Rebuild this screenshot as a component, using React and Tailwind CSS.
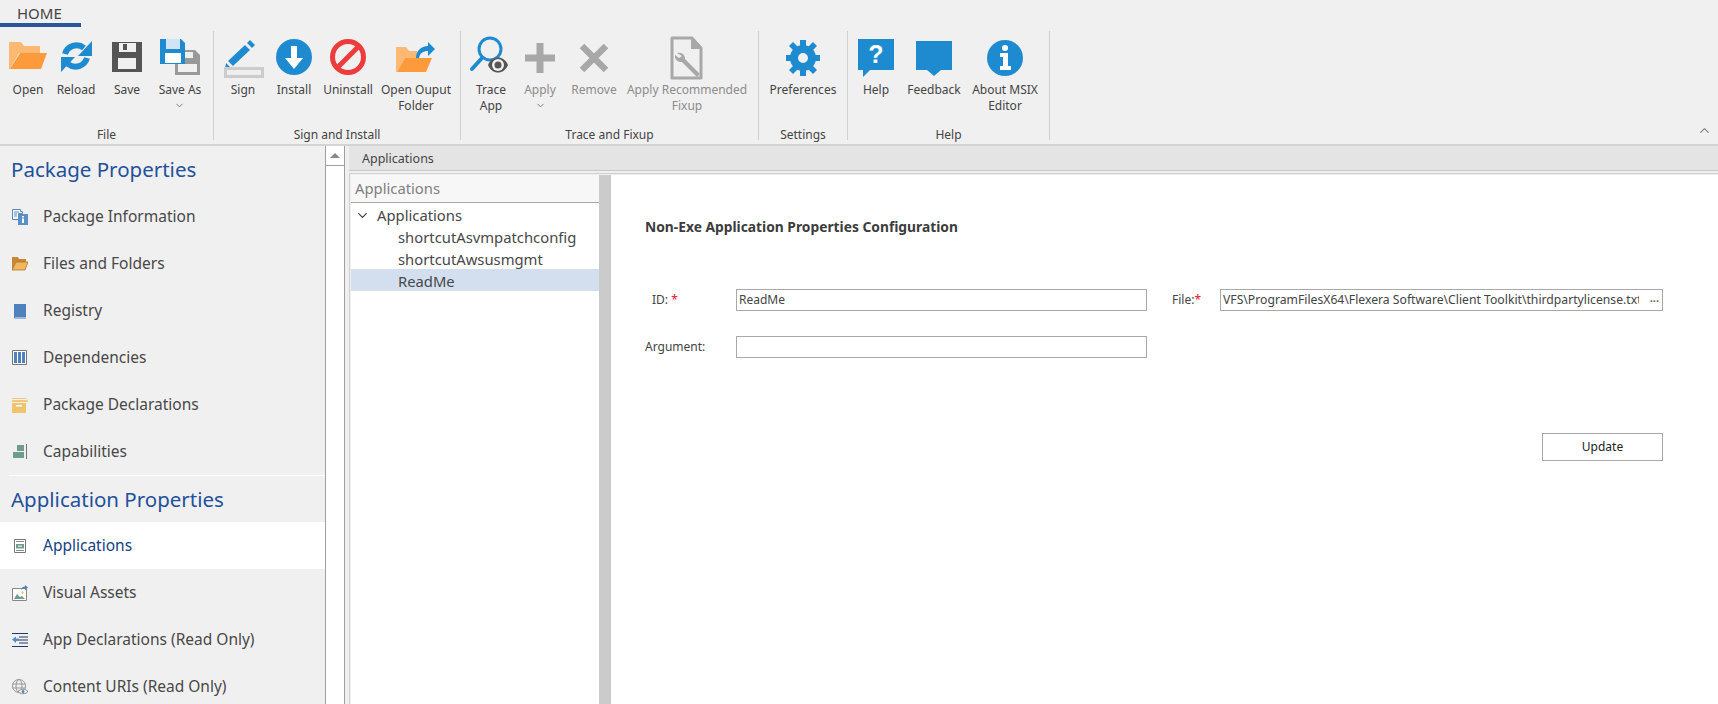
import { ChevronDown, ChevronUp } from 'lucide-react'

const BLUE = '#1e8bd0'
const GREY = '#a8a8a8'

function Ico({ children }) {
    return (
        <svg width="44" height="40" viewBox="0 0 44 40" className="overflow-visible">
            {children}
        </svg>
    )
}

const icons = {
    open: (
        <Ico>
            <path d="M3 4h12l3 4h16v7H13L4 31H3z" fill="#fdb873" />
            <path d="M14 15h27l-6 16H4z" fill="#fd9a3c" />
        </Ico>
    ),
    reload: (
        <Ico>
            <path d="M11 16a12 12 0 0 1 19-6" fill="none" stroke={BLUE} strokeWidth="6" />
            <path d="M38 3v15H24z" fill={BLUE} />
            <path d="M33 20a12 12 0 0 1-19 6" fill="none" stroke={BLUE} strokeWidth="6" />
            <path d="M7 34V19h14z" fill={BLUE} />
        </Ico>
    ),
    save: (
        <Ico>
            <path d="M7 4h30v30H7z" fill="#555" />
            <path d="M14 5h17v9H14z" fill="#f0f0f0" />
            <path d="M18 6h4v6h-4z" fill="#555" />
            <path d="M13 20h18v11H13z" fill="#f0f0f0" />
        </Ico>
    ),
    saveAs: (
        <Ico>
            <path d="M17 12h20l5 5v20H17z" fill="#999" />
            <path d="M25 14h10v6H25z" fill="#f0f0f0" />
            <path d="M20 26h19v8H20z" fill="#f0f0f0" />
            <path d="M2 1h21l4 4v21H2z" fill={BLUE} />
            <path d="M8 1h14v10H8z" fill="#cfe5f5" />
            <path d="M7 15h16v10H7z" fill="#fff" />
        </Ico>
    ),
    sign: (
        <Ico>
            <path d="M7 23 24 7l5 5-17 16z" fill={BLUE} />
            <path d="M26 5l3-3 5 5-3 3z" fill={BLUE} />
            <path d="M5 25l5 5-6 1z" fill={BLUE} />
            <rect x="4.5" y="30.5" width="37" height="8" fill="#eee" stroke="#ccc" strokeWidth="3" />
        </Ico>
    ),
    install: (
        <Ico>
            <circle cx="22" cy="19" r="18" fill={BLUE} />
            <path d="M19 8h6v12h6l-9 11-9-11h6z" fill="#fff" />
        </Ico>
    ),
    uninstall: (
        <Ico>
            <circle cx="22" cy="19" r="15.5" fill="none" stroke="#ee3b3b" strokeWidth="5" />
            <path d="M11 30 33 8" stroke="#ee3b3b" strokeWidth="5" />
        </Ico>
    ),
    openOutput: (
        <Ico>
            <path d="M2 9h10l3 4h8v7H11L3 34H2z" fill="#fdb873" />
            <path d="M11 20h27l-6 14H3z" fill="#fd9a3c" />
            <path d="M22 20c0-7 5-12 12-12V4l7 7-7 7v-5c-5 0-8 2-9 7z" fill={BLUE} />
        </Ico>
    ),
    trace: (
        <Ico>
            <circle cx="21" cy="11" r="11" fill="none" stroke={BLUE} strokeWidth="3" />
            <path d="M13 20 3 31" stroke={BLUE} strokeWidth="4" strokeLinecap="round" />
            <path d="M19 27c4-10 16-10 20 0-4 10-16 10-20 0z" fill="#555" />
            <circle cx="29" cy="27" r="6" fill="#f0f0f0" />
            <circle cx="29" cy="27" r="3.5" fill="#555" />
        </Ico>
    ),
    plus: (
        <Ico>
            <path d="M22 5v30M7 20h30" stroke={GREY} strokeWidth="7" />
        </Ico>
    ),
    remove: (
        <Ico>
            <path d="M10 8l24 24M34 8 10 32" stroke={GREY} strokeWidth="6.5" />
        </Ico>
    ),
    fixup: (
        <Ico>
            <path d="M7 0h20l9 10v30H7z" fill="none" stroke={GREY} strokeWidth="3" strokeLinejoin="round" />
            <path d="M26 0l10 11H26z" fill={GREY} />
            <path d="M12 15a6 6 0 0 1 8 6l15 15-3 3-15-15a6 6 0 0 1-7-7l4 3 3-2z" fill={GREY} />
        </Ico>
    ),
    gear: (
        <Ico>
            <g fill={BLUE}>
                <path d="M22 7a13 13 0 1 0 0 26 13 13 0 0 0 0-26zm0 8a5 5 0 1 1 0 10 5 5 0 0 1 0-10z" fillRule="evenodd" />
                <path d="M19 2h6v7h-6z" />
                <path d="M19 31h6v7h-6z" />
                <path d="M5 17h7v6H5z" />
                <path d="M32 17h7v6h-7z" />
                <path d="M8 8l4-4 6 6-4 4z" />
                <path d="M36 8l-4-4-6 6 4 4z" />
                <path d="M8 32l4 4 6-6-4-4z" />
                <path d="M36 32l-4 4-6-6 4-4z" />
            </g>
        </Ico>
    ),
    help: (
        <Ico>
            <path d="M4 1h36v31H16l-7 7v-7H4z" fill={BLUE} />
            <text x="22" y="25" textAnchor="middle" fontSize="25" fontWeight="700" fill="#fff" fontFamily="'Liberation Sans', sans-serif">?</text>
        </Ico>
    ),
    feedback: (
        <Ico>
            <path d="M4 3h36v29H29l-7 6-7-6H4z" fill={BLUE} />
        </Ico>
    ),
    about: (
        <Ico>
            <circle cx="22" cy="20" r="18" fill={BLUE} />
            <circle cx="22" cy="10" r="3" fill="#fff" />
            <path d="M17 15h8v13h3v4H17v-4h3v-9h-3z" fill="#fff" />
        </Ico>
    ),
}

const groups = [
    {
        label: 'File', width: 'w-[214px]', pad: 'pl-[4px]',
        items: [
            { w: 'w-[48px]', icon: 'open', text: ['Open'] },
            { w: 'w-[48px]', icon: 'reload', text: ['Reload'] },
            { w: 'w-[54px]', icon: 'save', text: ['Save'] },
            { w: 'w-[52px]', icon: 'saveAs', text: ['Save As'], arrow: true },
        ],
    },
    {
        label: 'Sign and Install', width: 'w-[247px]', pad: 'pl-[4px]',
        items: [
            { w: 'w-[50px]', icon: 'sign', text: ['Sign'] },
            { w: 'w-[52px]', icon: 'install', text: ['Install'] },
            { w: 'w-[56px]', icon: 'uninstall', text: ['Uninstall'] },
            { w: 'w-[80px]', icon: 'openOutput', text: ['Open Ouput', 'Folder'] },
        ],
    },
    {
        label: 'Trace and Fixup', width: 'w-[298px]', pad: '',
        items: [
            { w: 'w-[60px]', icon: 'trace', text: ['Trace', 'App'] },
            { w: 'w-[38px]', icon: 'plus', text: ['Apply'], arrow: true, off: true },
            { w: 'w-[70px]', icon: 'remove', text: ['Remove'], off: true },
            { w: 'w-[116px]', icon: 'fixup', text: ['Apply Recommended', 'Fixup'], off: true },
        ],
    },
    {
        label: 'Settings', width: 'w-[89px]', pad: '',
        items: [{ w: 'w-[88px]', icon: 'gear', text: ['Preferences'] }],
    },
    {
        label: 'Help', width: 'w-[202px]', pad: '',
        items: [
            { w: 'w-[56px]', icon: 'help', text: ['Help'] },
            { w: 'w-[60px]', icon: 'feedback', text: ['Feedback'] },
            { w: 'w-[82px]', icon: 'about', text: ['About MSIX', 'Editor'] },
        ],
    },
]

function RibbonButton({ item }) {
    return (
        <div className={`${item.w} flex flex-col items-center flex-shrink-0`}>
            <div className="h-[40px] w-[44px]">{icons[item.icon]}</div>
            <div className={`mt-[4px] text-[12px] leading-[16px] text-center whitespace-nowrap ${item.off ? 'text-[#8c8c8c]' : 'text-[#444]'}`}>
                {item.text.map((t) => (
                    <div key={t}>{t}</div>
                ))}
                {item.arrow && <ChevronDown size={11} className="mx-auto mt-[2px] text-[#777]" />}
            </div>
        </div>
    )
}

function Ribbon() {
    return (
        <div className="h-[146px] flex-shrink-0 bg-[#f0f0f0] border-b-2 border-[#d4d4d4] relative">
            <div className="h-[27px] w-[81px] border-b-4 border-[#2b579a] text-[15px] leading-[26px] text-[#444] pl-[17px]">HOME</div>
            <div className="flex mt-[4px] h-[109px]">
                {groups.map((g) => (
                    <div key={g.label} className={`${g.width} flex-shrink-0 border-r border-[#d0d0d0] flex flex-col`}>
                        <div className={`flex flex-1 pt-[7px] ${g.pad}`}>
                            {g.items.map((it) => (
                                <RibbonButton key={it.icon} item={it} />
                            ))}
                        </div>
                        <div className="text-center text-[12px] leading-[16px] text-[#444] mb-[-3px]">{g.label}</div>
                    </div>
                ))}
            </div>
            <ChevronUp size={15} className="absolute right-[6px] top-[123px] text-[#888]" />
        </div>
    )
}

const navIcons = {
    info: (
        <svg width="16" height="16" viewBox="0 0 16 16">
            <path d="M.5.5h8v2h2v2h-4v6h-6z" fill="#fff" stroke="#5b86b8" />
            <path d="M2 3h5M2 5h3M2 7h3" stroke="#5b86b8" />
            <path d="M6 5h10v11H6z" fill="#5b8fc7" />
            <path d="M10 7h2v1.5h-2zM10 9.5h2V14h-2z" fill="#fff" />
        </svg>
    ),
    folder: (
        <svg width="16" height="16" viewBox="0 0 16 16">
            <path d="M0 1h6l1 2h7v3H4L1 14H0z" fill="#c7873a" />
            <path d="M4 6h12l-3 8H0z" fill="#f0b75e" stroke="#b7722a" strokeWidth=".8" />
        </svg>
    ),
    book: (
        <svg width="16" height="16" viewBox="0 0 16 16">
            <path d="M3 1h11v13H3z" fill="#4f81bd" />
            <path d="M2.5 1v14H14" fill="none" stroke="#4f81bd" />
        </svg>
    ),
    columns: (
        <svg width="16" height="16" viewBox="0 0 16 16">
            <path d="M.5.5h14v14H.5z" fill="#fff" stroke="#777" />
            <path d="M2 2h3v11H2zM6 2h3v11H6zM10 2h3v11h-3z" fill="#4f81bd" />
        </svg>
    ),
    box: (
        <svg width="16" height="16" viewBox="0 0 16 16">
            <path d="M0 1h14v1H0zM0 3h16v2H0z" fill="#f2c877" />
            <path d="M15 1v3" stroke="#ddd" />
            <path d="M0 6h14v10H0z" fill="#f0c36d" />
            <path d="M4 8h6v1.5H4z" fill="#fff" />
        </svg>
    ),
    caps: (
        <svg width="16" height="16" viewBox="0 0 16 16">
            <path d="M5 1h7v6H5zM1 8h11v6H1z" fill="#6f9d8c" />
            <path d="M14.5 0v15" stroke="#777" />
        </svg>
    ),
    app: (
        <svg width="16" height="16" viewBox="0 0 16 16">
            <path d="M2.5 1.5h11v13h-11z" fill="#fff" stroke="#777" />
            <path d="M4 3.5h8M4 12.5h8" stroke="#888" />
            <path d="M4 6h8v4.5H4z" fill="#6f9d8c" />
            <path d="M6 7.5h4V9H6z" fill="#cfe0d8" />
        </svg>
    ),
    visual: (
        <svg width="16" height="16" viewBox="0 0 16 16">
            <path d="M.5 3.5h14v12H.5z" fill="#fff" stroke="#888" />
            <path d="M2 14l3-5 3 3 2-1 3 3z" fill="#6f9d8c" />
            <path d="M9 5c0-2 2-3.5 4-3.5V0l3 2.5L13 5V3.500c-2 0-3 .5-4 1.500z" fill="#4f81bd" />
            <circle cx="10.5" cy="7.5" r="1.2" fill="#f0c36d" />
        </svg>
    ),
    decl: (
        <svg width="16" height="16" viewBox="0 0 16 16">
            <path d="M0 1.5h16M7 5h9M7 8h9M7 11h9M0 14.500h16" stroke="#1f3864" />
            <path d="M0 7.5 4 4.5v2h3V9H4v2z" fill="#4f8fd1" />
        </svg>
    ),
    globe: (
        <svg width="16" height="16" viewBox="0 0 16 16">
            <circle cx="7" cy="7" r="6.5" fill="none" stroke="#999" />
            <ellipse cx="7" cy="7" rx="3" ry="6.5" fill="none" stroke="#999" />
            <path d="M.5 5h13M.5 9h13" stroke="#999" />
            <path d="M6 12.5c2.500-3 7-3 10 0-3 3-7.500 3-10 0z" fill="#fff" stroke="#888" />
            <circle cx="11" cy="12.5" r="1.5" fill="#4f81bd" />
        </svg>
    ),
}

function NavItem({ icon, label, active }) {
    return (
        <div className={`h-[47px] flex items-center pl-[12px] flex-shrink-0 ${active ? 'bg-white text-[#14427f]' : 'text-[#484848]'}`}>
            <span className="w-[31px] flex-shrink-0">{navIcons[icon]}</span>
            <span className="text-[15.5px] whitespace-nowrap">{label}</span>
        </div>
    )
}

function Sidebar() {
    return (
        <aside className="w-[325px] flex-shrink-0 bg-[#f0f0f0] flex flex-col overflow-hidden">
            <h2 className="h-[47px] flex-shrink-0 pl-[11px] pt-[8px] text-[20.5px] leading-[30px] text-[#23509b]">Package Properties</h2>
            <NavItem icon="info" label="Package Information" />
            <NavItem icon="folder" label="Files and Folders" />
            <NavItem icon="book" label="Registry" />
            <NavItem icon="columns" label="Dependencies" />
            <NavItem icon="box" label="Package Declarations" />
            <NavItem icon="caps" label="Capabilities" />
            <div className="ml-[9px] h-px bg-white flex-shrink-0" />
            <h2 className="h-[46px] flex-shrink-0 pl-[11px] pt-[8px] text-[20.5px] leading-[30px] text-[#23509b]">Application Properties</h2>
            <NavItem icon="app" label="Applications" active />
            <NavItem icon="visual" label="Visual Assets" />
            <NavItem icon="decl" label="App Declarations (Read Only)" />
            <NavItem icon="globe" label="Content URIs (Read Only)" />
        </aside>
    )
}

function Tree() {
    const rowClass = 'h-[22px] pl-[47px] leading-[24px] text-[14.8px] text-[#484848] whitespace-nowrap'
    return (
        <div className="w-[248px] flex-shrink-0 bg-white">
            <div className="h-[28px] bg-[#f7f7f7] border-b border-[#a8a8a8] pl-[4px] text-[14.8px] leading-[26px] text-[#808080]">Applications</div>
            <div className="h-[22px] pt-[2px] flex items-center text-[14.8px] text-[#484848]">
                <ChevronDown size={15} className="ml-[4px] mr-[7px] text-[#444]" />
                Applications
            </div>
            <div className={rowClass}>shortcutAsvmpatchconfig</div>
            <div className={rowClass}>shortcutAwsusmgmt</div>
            <div className={`${rowClass} bg-[#d3dfef]`}>ReadMe</div>
        </div>
    )
}

const inputClass = 'h-[22px] border border-[#a9a9a9] bg-white flex items-center pl-[2px] pr-[3px] text-[12px] text-[#444] overflow-hidden whitespace-nowrap'

function Form() {
    return (
        <div className="flex-1 bg-white pl-[34px] pr-[55px] pt-[43px] text-[12px] text-[#444]">
            <h3 className="h-[18px] text-[13.8px] leading-[18px] font-bold text-[#3c3c3c] whitespace-nowrap">Non-Exe Application Properties Configuration</h3>
            <div className="flex items-center mt-[53px]">
                <div className="w-[91px] pl-[7px]">
                    ID: <span className="text-[#e8102a]">*</span>
                </div>
                <div className={`${inputClass} w-[411px]`}>ReadMe</div>
                <div className="w-[48px] ml-[25px]">
                    File:<span className="text-[#e8102a]">*</span>
                </div>
                <div className={`${inputClass} w-[443px]`}>
                    <span className="flex-1 overflow-hidden text-[12.2px]">VFS\ProgramFilesX64\Flexera Software\Client Toolkit\thirdpartylicense.txt</span>
                    <span className="w-[20px] text-right text-[11px] leading-none font-bold text-[#666]">···</span>
                </div>
            </div>
            <div className="flex items-center mt-[25px]">
                <div className="w-[91px]">Argument:</div>
                <div className={`${inputClass} w-[411px]`} />
            </div>
            <div className="flex justify-end mt-[75px]">
                <button className="w-[121px] h-[28px] border border-[#a9a9a9] bg-white text-[12px] text-[#222]">Update</button>
            </div>
        </div>
    )
}

export default function App() {
    return (
        <div className="h-screen w-full overflow-hidden flex flex-col bg-[#f0f0f0] font-['Noto_Sans',sans-serif]">
            <Ribbon />
            <div className="flex flex-1 min-h-0">
                <Sidebar />
                <div className="w-[20px] flex-shrink-0 border-x border-[#a0a0a0] bg-white">
                    <div className="h-[20px] border-b border-[#a0a0a0] flex items-center justify-center">
                        <div className="w-0 h-0 border-x-[5px] border-x-transparent border-b-[5px] border-b-[#888]" />
                    </div>
                </div>
                <div className="flex-1 min-w-0 flex flex-col pl-[4px]">
                    <div className="h-[25px] flex-shrink-0 bg-[#e4e4e4] border-b border-[#c8c8c8] pl-[13px] text-[12.5px] leading-[26px] text-[#444]">Applications</div>
                    <div className="flex flex-1 min-h-0 mt-[2px] border-l border-t border-[#d0d0d0] pl-px pt-px">
                        <Tree />
                        <div className="w-[12px] flex-shrink-0 bg-[#cbcbcb]" />
                        <Form />
                    </div>
                </div>
            </div>
        </div>
    )
}
